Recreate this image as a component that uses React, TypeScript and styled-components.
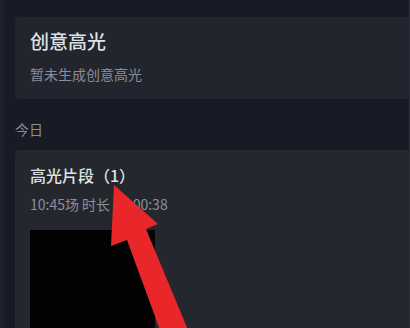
import React from "react";
import styled, { createGlobalStyle } from "styled-components";

const Global = createGlobalStyle`
  html, body { margin: 0; padding: 0; background: #181b26; }
  body { font-family: "Noto Sans CJK SC", "Noto Sans", sans-serif; overflow: hidden; }
`;

const Page = styled.div`
  position: relative;
  width: 410px;
  height: 328px;
  box-sizing: border-box;
  background: #181b26;
  border-left: 4px solid #1d202c;
  border-right: 1px solid #2b2e38;
  padding: 17px 0 0 11px;
  overflow: hidden;
  display: flex;
  flex-direction: column;
`;

const Card = styled.section<{ $bg: string }>`
  background: ${(p) => p.$bg};
  border-radius: 4px 0 0 4px;
  padding: 11px 15px 15px 15px;
  display: flex;
  flex-direction: column;
`;

const Title = styled.div<{ $size: number; $lh: number; $weight: number }>`
  font-size: ${(p) => p.$size}px;
  line-height: ${(p) => p.$lh}px;
  color: #dfe0e3;
  font-weight: ${(p) => p.$weight};
`;

const Sub = styled.div<{ $mt: number }>`
  margin-top: ${(p) => p.$mt}px;
  font-size: 14px;
  line-height: 20px;
  color: #8c8f97;
`;

const SectionLabel = styled.div`
  margin: 20px 0 11px 0;
  font-size: 14px;
  line-height: 20px;
  color: #8c8f97;
`;

const ClipCard = styled(Card)`
  flex: 1;
  padding-top: 14px;
`;

const Thumb = styled.div`
  margin-top: 16px;
  width: 125px;
  height: 120px;
  background: #020203;
`;

const Arrow = styled.svg`
  position: absolute;
  left: 0;
  top: 0;
  width: 410px;
  height: 328px;
  pointer-events: none;
  filter: blur(0.6px);
`;

export default function App() {
  return (
    <>
      <Global />
      <Page>
        <Card $bg="#22252e">
          <Title $size={19} $lh={26} $weight={500}>创意高光</Title>
          <Sub $mt={10}>暂未生成创意高光</Sub>
        </Card>
        <SectionLabel>今日</SectionLabel>
        <ClipCard $bg="#25272f">
          <Title $size={16} $lh={22} $weight={500}>高光片段（1）</Title>
          <Sub $mt={8}>10:45场 时长 00:00:38</Sub>
          <Thumb />
        </ClipCard>
        <Arrow viewBox="0 0 410 328">
          <polygon
            points="110,185 154,224 142,229 184,330 156,330 123,240 107,246"
            fill="#e9272b"
          />
        </Arrow>
      </Page>
    </>
  );
}
